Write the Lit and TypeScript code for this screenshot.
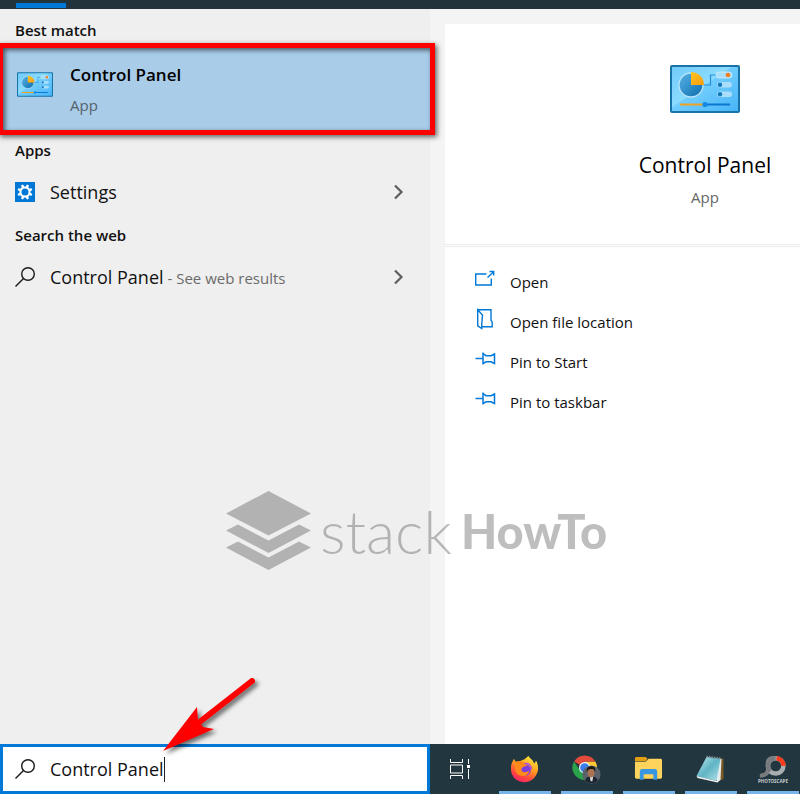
import { LitElement, html, css, svg } from "lit";
import { customElement, property } from "lit/decorators.js";

const panelIcon = html`<svg viewBox="0 0 70 48" aria-hidden="true">
  <defs>
    <linearGradient id="board" x1="0" y1="0" x2="1" y2="1">
      <stop offset="0" stop-color="#6fcaf8" />
      <stop offset=".45" stop-color="#8bdcff" />
      <stop offset=".46" stop-color="#72cdfd" />
      <stop offset="1" stop-color="#45b4f8" />
    </linearGradient>
    <linearGradient id="disc" x1="0" y1="0" x2="1" y2="1">
      <stop offset="0" stop-color="#58b4e8" />
      <stop offset="1" stop-color="#0c6cab" />
    </linearGradient>
    <linearGradient id="slice" x1="0" y1="0" x2="1" y2="1">
      <stop offset="0" stop-color="#ffc522" />
      <stop offset="1" stop-color="#f99a0c" />
    </linearGradient>
  </defs>
  <rect x="1" y="1" width="68" height="46" rx="1" fill="url(#board)" stroke="#1a73a6" stroke-width="2" />
  <path d="M32 20h8.500v-10h7" fill="none" stroke="#2590d8" stroke-width="1.200" />
  <circle cx="21" cy="20" r="12" fill="url(#disc)" stroke="#b9e3f8" stroke-width="1.300" />
  <path d="M21 20V7a13 13 0 0 1 13 13z" fill="url(#slice)" />
  <g fill="#a9defb">
    <rect x="46" y="7" width="16" height="6" rx="3" stroke="#d5f1ff" stroke-width=".7" />
    <rect x="47" y="17" width="15" height="5.500" rx="2.700" />
    <rect x="47" y="26.500" width="15" height="5.500" rx="2.700" />
  </g>
  <circle cx="58" cy="10" r="2.300" fill="#f57c12" />
  <circle cx="50" cy="19.800" r="2.200" fill="#1279ba" />
  <circle cx="50" cy="29.300" r="2.200" fill="#1279ba" />
  <path d="M10 39.500h25" stroke="#f2a21d" stroke-width="2" />
  <path d="M35 39.500h25" stroke="#0d76d0" stroke-width="2" />
  <circle cx="35" cy="39.500" r="2.600" fill="#118ae6" />
</svg>`;

const gearIcon = html`<svg viewBox="0 0 20 20" aria-hidden="true">
  <rect width="20" height="20" fill="#0078d7" />
  <g fill="#fff">
    ${[22.5, 67.5, 112.5, 157.5, 202.5, 247.5, 292.5, 337.5].map(
      (a) => svg`<path d="M8.500 5.200L9 2.400h2l.5 2.800z" transform="rotate(${a} 10 10)" />`
    )}
  </g>
  <circle cx="10" cy="10" r="4.500" fill="none" stroke="#fff" stroke-width="2" />
</svg>`;

const searchIcon = html`<svg viewBox="0 0 20 20" fill="none" stroke="#1a1a1a" stroke-width="1.400" aria-hidden="true">
  <circle cx="13" cy="7" r="6.300" />
  <path d="M8.500 11.500L.5 19.500" />
</svg>`;

const chevron = html`<svg viewBox="0 0 10 16" fill="none" stroke="#5f5f5f" stroke-width="2.200" aria-hidden="true">
  <path d="M1 1.500L7.500 8 1 14.500" />
</svg>`;

const openIcon = html`<svg viewBox="0 0 22 20" fill="none" stroke="#0078d7" stroke-width="1.400" aria-hidden="true">
  <path d="M11.500 5H.7v11h15.600V9.500M12.500 8.500l6-5.500M14.500 2.500h4.200v4" />
</svg>`;

const folderIcon = html`<svg viewBox="0 0 22 20" fill="none" stroke="#0078d7" stroke-width="1.400" aria-hidden="true">
  <path d="M2.700.8h13.300v10.500l1.200 1.700v4.800H7M2.700.8v16l4 2.700V16L7.500 6z" />
</svg>`;

const pinIcon = html`<svg viewBox="0 0 22 20" fill="none" stroke="#0078d7" stroke-width="1.500" aria-hidden="true">
  <path d="M.5 9.500H8M8 3.500v12M8 4.500l3 2.200h5L19.500 5v9.500l-3.500-1.700h-5L8 14.700" />
</svg>`;

const taskViewIcon = html`<svg viewBox="0 0 20 20" fill="none" stroke="#fff" stroke-width="1" aria-hidden="true">
  <path d="M.5 0v3.500h12V0M.5 20v-3.500h12V20M.5 6h12v8H.5zM18.500 0v5M18.500 10v10" />
  <path d="M17 6h3v3h-3z" fill="#fff" stroke="none" />
</svg>`;

const firefoxIcon = html`<svg viewBox="0 0 30 30" aria-hidden="true">
  <defs>
    <linearGradient id="fox" x1=".8" y1="0" x2=".3" y2="1">
      <stop offset="0" stop-color="#fff13f" />
      <stop offset=".4" stop-color="#ffa31f" />
      <stop offset=".75" stop-color="#ff4a3c" />
      <stop offset="1" stop-color="#f5226b" />
    </linearGradient>
  </defs>
  <path d="M2 8l2-4 2 3 4-.5 5-2L19 1c2 3 5 4 6 8l2-3c3 5 2.500 11 0 15a14 14 0 0 1-25-1C.5 16 .8 11 2 8z" fill="url(#fox)" />
  <circle cx="15.500" cy="15.500" r="6" fill="#7b3fe0" />
  <path d="M6 7c3-1 7-1 9 1l5 1-3 2c-2 1-4 1-5 3-1 4 4 5 8 2-1 5-6 7-10 5-5-2-6-9-4-14z" fill="#ff8a1c" />
  <path d="M15 9c4-1 7 2 7 6" fill="none" stroke="#a64bf0" stroke-width="1.500" />
</svg>`;

const chromeIcon = html`<svg viewBox="0 0 32 32" aria-hidden="true">
  <path d="M14 14L8.100 16 2.300 7.200A13.500 13.500 0 0 0 14 27.500l5-8z" fill="#2ba24c" />
  <path d="M14 14l5.200 4L14 27.500A13.500 13.500 0 0 0 25.700 7.200H14z" fill="#fcc934" />
  <path d="M14 14L2.300 7.200A13.500 13.500 0 0 1 25.700 7.200H14z" fill="#e24a3b" />
  <circle cx="14" cy="14" r="6.300" fill="#f4f6f8" />
  <circle cx="14" cy="14" r="5" fill="#3b7ded" />
  <circle cx="21.500" cy="21.500" r="10" fill="#59616a" />
  <path d="M14.500 28c1-3 3-4 5-4h4c3 0 4 2 5 4-4 4-10 4-14 0z" fill="#1c2430" />
  <path d="M19.500 23h4l-1 6h-2z" fill="#d8dde2" />
  <ellipse cx="21" cy="19.500" rx="4" ry="5.200" fill="#a87253" />
  <path d="M16.500 19c-1-5 2-6.500 5-6.500s5 2 4 6.500c-1-3-2-3.500-4-3.500s-4 .5-5 3.500z" fill="#1b1717" />
</svg>`;

const explorerIcon = html`<svg viewBox="-1 -1 30 28" aria-hidden="true">
  <path d="M0 1.500Q0 0 1.500 0H11l2 2-2 2.500H0z" fill="#e39f12" />
  <path d="M0 5h11l3-3h12.500Q28 2 28 3.500V21q0 1.500-1.500 1.500h-25Q0 22.500 0 21z" fill="#ffd35c" />
  <path d="M5 23.500V15q0-2.500 2.500-2.500h13Q23 12.500 23 15v8.500h-4V18H9v5.500z" fill="#3796e0" />
</svg>`;

const notepadIcon = html`<svg viewBox="0 0 28 29" aria-hidden="true">
  <defs>
    <linearGradient id="page" x1="0" y1="0" x2="1" y2="1">
      <stop offset="0" stop-color="#bfe9ef" />
      <stop offset=".5" stop-color="#5fb4c4" />
      <stop offset="1" stop-color="#b8e2ea" />
    </linearGradient>
  </defs>
  <path d="M24 3l3 1v20l-5 2z" fill="#7a5a22" />
  <path d="M10 2l15 2-1 21-3 2z" fill="#e6ecee" />
  <path d="M10 2l14 2-4 22L0 21z" fill="url(#page)" />
  <path d="M0 21l20 5 3-1-2 2.500L1 23z" fill="#f4f6f7" />
  <path d="M10 1.500l15 2" stroke="#77868c" stroke-width="2" stroke-dasharray="1.500 1" />
</svg>`;

const photoIcon = html`<svg viewBox="0 0 30 32" aria-hidden="true">
  <path d="M17 1C7 1 7 8 8 12c1 5-1 8-7 9v4c9 0 13-5 11-13-.5-4 1-6 5-6z" fill="#777b7e" />
  <circle cx="18.500" cy="12" r="8.500" fill="none" stroke="#a9adb0" stroke-width="5" />
  <path d="M18.500 3.500a8.500 8.500 0 0 0-6 14.500" fill="none" stroke="#777b7e" stroke-width="5" />
  <path d="M19.500 3.500A8.500 8.500 0 0 1 27 12" fill="none" stroke="#fb3b1c" stroke-width="5" />
  <text x="-1" y="30.500" font-family="Open Sans, sans-serif" font-size="5" font-weight="700" fill="#c9cdd0">PHOTOSCAPE</text>
</svg>`;

@customElement("result-row")
class ResultRow extends LitElement {
  @property() label = "";
  @property() note = "";
  @property({ attribute: false }) icon: unknown = null;

  static styles = css`
    :host { display: block; }
    .row {
      display: flex; align-items: center; width: 100%; height: 45px; padding: 0 25px 4px 15px;
      border: 0; background: none; font: inherit; font-size: 18px; color: #111; text-align: left;
    }
    .icon { width: 20px; height: 20px; margin-right: 15px; }
    .icon svg, .go svg { display: block; width: 100%; height: 100%; overflow: visible; }
    .note { font-size: 15px; color: #6b6b6b; }
    .text { flex: 1; white-space: pre; }
    .go { width: 12px; height: 16px; }
  `;

  render() {
    return html`<button class="row">
      <span class="icon">${this.icon}</span>
      <span class="text">${this.label}${this.note ? html`<span class="note"> - ${this.note}</span>` : ""}</span>
      <span class="go">${chevron}</span>
    </button>`;
  }
}

@customElement("app-root")
class AppRoot extends LitElement {
  static styles = css`
    * { box-sizing: border-box; }
    :host {
      position: relative; display: flex; flex-direction: column; min-height: 100vh; overflow: hidden;
      font-family: "Open Sans", "Noto Sans", sans-serif; color: #111; background: #f4f4f4;
    }
    svg { display: block; width: 100%; height: 100%; overflow: visible; }
    button { border: 0; margin: 0; padding: 0; background: none; font: inherit; color: inherit; }
    h1, h2, p, ul { margin: 0; padding: 0; }
    ul { list-style: none; }
    .top { height: 9px; padding: 3px 0 0 16px; background: #22333c; }
    .tab { width: 50px; height: 5px; background: #0078d7; }
    .main { flex: 1; display: flex; }
    .results { flex: none; width: 430px; background: #efefef; }
    h2 { height: 40px; padding-left: 15px; font-size: 15px; line-height: 38px; font-weight: 600; }
    .first { height: 37px; line-height: 42px; }
    .best { position: relative; }
    .bestrow {
      display: flex; align-items: center; gap: 17px; width: 100%; height: 85px; padding: 2px 17px 0;
      background: #a9cce9; text-align: left;
    }
    .small { width: 36px; height: 25px; margin-top: -10px; }
    .name { display: block; font-size: 17px; line-height: 30px; font-weight: 600; color: #000; }
    .kind { display: block; font-size: 15px; line-height: 30px; color: #55626c; }
    .frame {
      position: absolute; inset: -3px -5px -4px -2px; border: 5px solid #f00; pointer-events: none;
      box-shadow: 2px 2px 5px rgba(0, 0, 0, .6), inset 2px 2px 5px rgba(0, 0, 0, .6);
    }
    .side { flex: 1; min-width: 0; margin: 15px 0 0 15px; overflow: hidden; background: #fff; }
    .detail { min-width: 520px; }
    .hero {
      display: flex; flex-direction: column; align-items: center; height: 223px; padding-top: 41px;
      border-bottom: 3px double #ececec;
    }
    .large { width: 70px; height: 48px; margin-bottom: 37px; }
    h1 { font-size: 21px; line-height: 30px; font-weight: 400; color: #000; }
    .hero p { margin-top: 2px; font-size: 15px; line-height: 30px; color: #666; }
    .actions { padding: 15px 30px; }
    .action { display: flex; align-items: center; gap: 13px; width: 100%; height: 40px; font-size: 15px; color: #111; }
    .glyph { width: 22px; height: 20px; margin-top: -6px; }
    .bottom { display: flex; height: 50px; background: #21363f; }
    .search {
      flex: none; display: flex; align-items: center; width: 430px; padding: 0 12px; background: #fff;
      border: 3px solid #0078d7;
    }
    .lens { width: 20px; height: 20px; margin-right: 15px; }
    input {
      field-sizing: content; padding: 0; border: 0; outline: 0; background: none;
      font: inherit; font-size: 18px; color: #111;
    }
    .caret { width: 1px; height: 25px; background: #222; }
    .view { width: 60px; padding: 15px 20px; }
    .running { display: flex; gap: 10px; padding-left: 9px; }
    .task {
      display: flex; align-items: center; justify-content: center; width: 52px; height: 50px;
      padding: 3px 2px 0 0; border-bottom: 3px solid #76b5ea;
    }
    .pic { width: 29px; height: 29px; }
    .watermark {
      position: absolute; left: 226px; top: 491px; display: flex; align-items: center; gap: 9px;
      opacity: .25; color: #000; pointer-events: none; font-family: Lato, sans-serif; line-height: 80px;
    }
    .stack { width: 85px; height: 80px; }
    .thin { font-size: 60px; font-weight: 300; }
    .thick { font-size: 47px; font-weight: 900; }
    .arrow { position: absolute; left: 163px; top: 675px; width: 95px; height: 76px; pointer-events: none; }
    .arrow svg { filter: drop-shadow(3px 3px 2px rgba(0, 0, 0, .55)); }
  `;

  render() {
    const actions = [
      { icon: openIcon, label: "Open" },
      { icon: folderIcon, label: "Open file location" },
      { icon: pinIcon, label: "Pin to Start" },
      { icon: pinIcon, label: "Pin to taskbar" },
    ];
    const apps = [
      { icon: firefoxIcon, label: "Firefox" },
      { icon: chromeIcon, label: "Chrome" },
      { icon: explorerIcon, label: "File Explorer" },
      { icon: notepadIcon, label: "Notepad" },
      { icon: photoIcon, label: "PhotoScape" },
    ];
    return html`
      <div class="top"><div class="tab"></div></div>
      <main class="main">
        <section class="results">
          <h2 class="first">Best match</h2>
          <div class="best">
            <button class="bestrow">
              <span class="small">${panelIcon}</span>
              <span><span class="name">Control Panel</span><span class="kind">App</span></span>
            </button>
            <div class="frame"></div>
          </div>
          <h2>Apps</h2>
          <result-row label="Settings" .icon=${gearIcon}></result-row>
          <h2>Search the web</h2>
          <result-row label="Control Panel" note="See web results" .icon=${searchIcon}></result-row>
        </section>
        <section class="side">
          <div class="detail">
            <header class="hero">
              <div class="large">${panelIcon}</div>
              <h1>Control Panel</h1>
              <p>App</p>
            </header>
            <ul class="actions">
              ${actions.map((a) => html`<li><button class="action"><span class="glyph">${a.icon}</span>${a.label}</button></li>`)}
            </ul>
          </div>
        </section>
      </main>
      <footer class="bottom">
        <label class="search">
          <span class="lens">${searchIcon}</span>
          <input type="text" aria-label="Search" size="12" value="Control Panel" />
          <span class="caret"></span>
        </label>
        <button class="view" aria-label="Task View">${taskViewIcon}</button>
        <nav class="running">
          ${apps.map((a) => html`<button class="task" aria-label=${a.label}><span class="pic">${a.icon}</span></button>`)}
        </nav>
      </footer>
      <div class="watermark">
        <div class="stack">
          <svg viewBox="0 0 85 80" aria-hidden="true">
            <path d="M42.500 0L85 22.500 42.500 44.500 0 22.500z" />
            <path d="M0 39.500l12-6 30.500 16 30.500-16 12 6L42.500 62z" />
            <path d="M0 56.500l12-6 30.500 16 30.500-16 12 6L42.500 79z" />
          </svg>
        </div>
        <span class="thin">stack</span>
        <span class="thick">HowTo</span>
      </div>
      <div class="arrow">
        <svg viewBox="0 0 95 76" aria-hidden="true">
          <path d="M89 6L34 49" stroke="#f00" stroke-width="6" stroke-linecap="round" />
          <path d="M0 76L34 32l1 13 5 7 11 2z" fill="#f00" />
        </svg>
      </div>
    `;
  }
}
